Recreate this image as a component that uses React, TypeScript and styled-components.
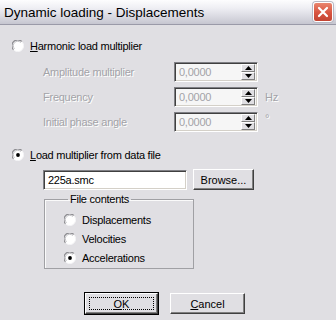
import { Fragment } from 'react';
import styled, { createGlobalStyle } from 'styled-components';

const GlobalStyle = createGlobalStyle`
  html, body {
    margin: 0;
    padding: 0;
    background: #e0dfe3;
  }
  * {
    box-sizing: border-box;
  }
`;

const Window = styled.div`
  display: flex;
  flex-direction: column;
  width: 336px;
  height: 320px;
  background: #e0dfe3;
  font-family: 'Liberation Sans', Arial, sans-serif;
  font-size: 11px;
  letter-spacing: -0.25px;
  color: #000;
  overflow: hidden;
`;

const TitleBar = styled.div`
  display: flex;
  align-items: center;
  justify-content: space-between;
  height: 25px;
  padding: 0 3px 0 4px;
  background: linear-gradient(180deg, #fdfdfe 0%, #eeeef3 35%, #d6d6de 75%, #c6c6d0 100%);
  border-bottom: 1px solid #9a9aa8;
`;

const Title = styled.span`
  font-size: 13.5px;
  letter-spacing: 0;
  color: #000;
`;

const CloseButton = styled.div`
  display: flex;
  align-items: center;
  justify-content: center;
  width: 20px;
  height: 20px;
  border-radius: 3px;
  border: 1px solid #fff;
  background: linear-gradient(180deg, #e9866f 0%, #d8533f 55%, #c24433 100%);
  box-shadow: 0 0 0 1px #b9b9c4;
`;

const Body = styled.div`
  display: flex;
  flex-direction: column;
  padding: 13px 0 0 12px;
`;

const RadioRow = styled.label<{ $height?: number }>`
  display: flex;
  align-items: center;
  gap: 6px;
  height: ${(p) => p.$height ?? 16}px;
  white-space: nowrap;
`;

const ParamGrid = styled.div`
  display: grid;
  grid-template-columns: 131px 91px auto;
  grid-auto-rows: 20px;
  row-gap: 5px;
  align-items: center;
  margin: 8px 0 0 31px;
`;

const Muted = styled.span<{ $raise?: boolean }>`
  color: #a3a3a8;
  text-shadow: 1px 1px 0 #ffffff;
  align-self: ${(p) => (p.$raise ? 'start' : 'center')};
`;

const Sunken = styled.div<{ $disabled?: boolean; $width: number }>`
  display: flex;
  align-items: center;
  width: ${(p) => p.$width}px;
  height: 20px;
  padding: 0 2px 0 3px;
  background: ${(p) => (p.$disabled ? '#f6f6f6' : '#ffffff')};
  color: ${(p) => (p.$disabled ? '#a3a3a8' : '#000')};
  border-top: 1px solid #7f7f84;
  border-left: 1px solid #7f7f84;
  border-right: 1px solid #ffffff;
  border-bottom: 1px solid #ffffff;
  box-shadow: inset 1px 1px 0 #404040, inset -1px -1px 0 #d4d0c8;
`;

const InputText = styled.span`
  flex: 1;
  padding-left: 1px;
`;

const Spinner = styled.div`
  display: flex;
  flex-direction: column;
  width: 14px;
  height: 16px;
`;

const SpinHalf = styled.div`
  display: flex;
  align-items: center;
  justify-content: center;
  height: 8px;
  background: #e0dfe3;
  border-top: 1px solid #fff;
  border-left: 1px solid #fff;
  border-right: 1px solid #808080;
  border-bottom: 1px solid #808080;
`;

const Section = styled.div<{ $top: number }>`
  margin-top: ${(p) => p.$top}px;
`;

const FileRow = styled.div`
  display: flex;
  align-items: center;
  gap: 6px;
  margin: 6px 0 0 31px;
`;

const Button = styled.div<{ $width: number; $default?: boolean }>`
  display: flex;
  align-items: center;
  justify-content: center;
  width: ${(p) => p.$width}px;
  height: 21px;
  background: #e0dfe3;
  border-top: 1px solid #ffffff;
  border-left: 1px solid #ffffff;
  border-right: 1px solid #404040;
  border-bottom: 1px solid #404040;
  box-shadow: inset -1px -1px 0 #808080;
  outline: ${(p) => (p.$default ? '1px solid #000' : 'none')};
  letter-spacing: 0;
`;

const Focus = styled.span`
  display: flex;
  align-items: center;
  justify-content: center;
  width: calc(100% - 6px);
  height: calc(100% - 6px);
  border: 1px dotted #000;
`;

const GroupBox = styled.fieldset`
  width: 150px;
  margin: 3px 0 0 32px;
  padding: 4px 0 1px 19px;
  border: 1px solid #a0a0a4;
  box-shadow: inset 1px 1px 0 #fafafa;
  min-width: 0;
`;

const Legend = styled.legend`
  margin-left: 4px;
  padding: 0 2px;
  line-height: 13px;
`;

const ButtonRow = styled.div`
  display: flex;
  gap: 12px;
  margin: 24px 0 0 73px;
`;

const Radio = ({ checked }: { checked?: boolean }) => (
  <svg width="12" height="12" viewBox="0 0 12 12">
    <circle cx="6" cy="6" r="5.5" fill="#ffffff" />
    <path d="M1.6 9.9 A5.5 5.5 0 0 1 9.9 1.6" fill="none" stroke="#8c8c90" strokeWidth="1.2" />
    <path d="M2.6 8.8 A4.2 4.2 0 0 1 8.8 2.6" fill="none" stroke="#c4c4c8" strokeWidth="1" />
    <path d="M9.9 1.6 A5.5 5.5 0 0 1 1.6 9.9" fill="none" stroke="#f4f4f6" strokeWidth="1" />
    {checked && <circle cx="6" cy="6" r="1.9" fill="#000" />}
  </svg>
);

const Arrow = ({ up }: { up?: boolean }) => (
  <svg width="7" height="4" viewBox="0 0 7 4">
    <path d={up ? 'M0 4 L3.5 0 L7 4 Z' : 'M0 0 L7 0 L3.5 4 Z'} fill="#000" />
  </svg>
);

const SpinField = ({ value }: { value: string }) => (
  <Sunken $disabled $width={84}>
    <InputText>{value}</InputText>
    <Spinner>
      <SpinHalf>
        <Arrow up />
      </SpinHalf>
      <SpinHalf>
        <Arrow />
      </SpinHalf>
    </Spinner>
  </Sunken>
);

const params = [
  { label: 'Amplitude multiplier', unit: '' },
  { label: 'Frequency', unit: 'Hz' },
  { label: 'Initial phase angle', unit: '°' },
];

const contents = [
  { label: 'Displacements', checked: false },
  { label: 'Velocities', checked: false },
  { label: 'Accelerations', checked: true },
];

const App = () => {
  return (
    <Window>
      <GlobalStyle />
      <TitleBar>
        <Title>Dynamic loading - Displacements</Title>
        <CloseButton>
          <svg width="12" height="12" viewBox="0 0 12 12">
            <path d="M2 2 L10 10 M10 2 L2 10" stroke="#fff" strokeWidth="2.2" strokeLinecap="round" />
          </svg>
        </CloseButton>
      </TitleBar>
      <Body>
        <RadioRow>
          <Radio />
          <span>
            <u>H</u>armonic load multiplier
          </span>
        </RadioRow>
        <ParamGrid>
          {params.map((p) => (
            <Fragment key={p.label}>
              <Muted>{p.label}</Muted>
              <SpinField value="0,0000" />
              <Muted $raise={p.unit === '°'}>{p.unit}</Muted>
            </Fragment>
          ))}
        </ParamGrid>
        <Section $top={15}>
          <RadioRow>
            <Radio checked />
            <span>
              <u>L</u>oad multiplier from data file
            </span>
          </RadioRow>
        </Section>
        <FileRow>
          <Sunken $width={144}>
            <InputText>225a.smc</InputText>
          </Sunken>
          <Button $width={61}>Browse...</Button>
        </FileRow>
        <GroupBox>
          <Legend>File contents</Legend>
          {contents.map((c) => (
            <RadioRow key={c.label} $height={19}>
              <Radio checked={c.checked} />
              <span>{c.label}</span>
            </RadioRow>
          ))}
        </GroupBox>
        <ButtonRow>
          <Button $width={73} $default>
            <Focus>
              <u>O</u>K
            </Focus>
          </Button>
          <Button $width={75}>
            <span>
              <u>C</u>ancel
            </span>
          </Button>
        </ButtonRow>
      </Body>
    </Window>
  );
};

export default App;
